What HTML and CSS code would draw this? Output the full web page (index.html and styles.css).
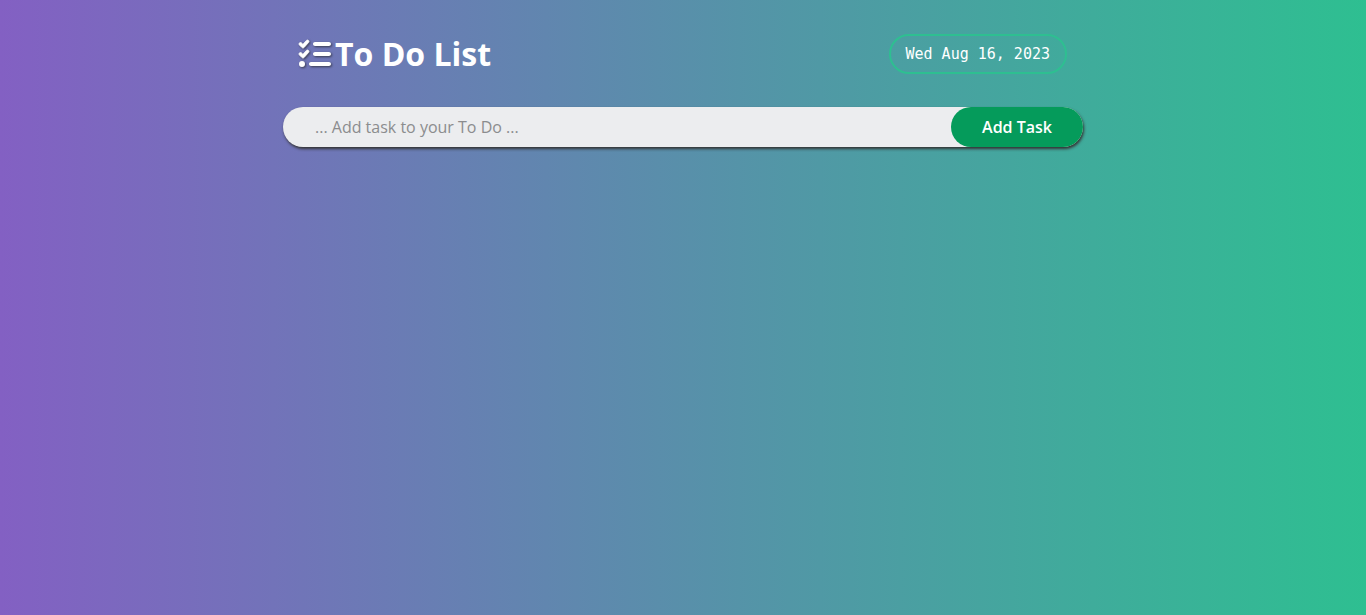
FILE: index.html
```html
<!DOCTYPE html>
<html lang="en">
<head>
  <meta charset="utf-8">
  <meta name="viewport" content="width=device-width, initial-scale=1">
  <title>To Do List</title>
  <link rel="stylesheet" href="styles.css">
</head>
<body>
  <main class="app">
    <header class="header">
      <h1 class="title">
        <svg class="title-icon" viewBox="0 0 512 512" aria-hidden="true">
          <path class="title-icon-checks" d="M152.100 38.200c9.900 8.900 10.700 24 1.800 33.900l-72 80c-4.400 4.900-10.600 7.800-17.200 7.900s-12.900-2.400-17.600-7L7 113C-2.300 103.600-2.300 88.400 7 79s24.600-9.400 33.900 0l22.100 22.100 55.100-61.200c8.900-9.900 24-10.700 33.900-1.800zm0 160c9.900 8.900 10.700 24 1.800 33.900l-72 80c-4.400 4.900-10.600 7.800-17.200 7.900s-12.900-2.400-17.600-7L7 273c-9.400-9.400-9.400-24.600 0-33.900s24.600-9.400 33.900 0l22.100 22.100 55.100-61.200c8.900-9.900 24-10.700 33.900-1.800z"/>
          <path d="M224 96c0-17.700 14.300-32 32-32H480c17.700 0 32 14.300 32 32s-14.300 32-32 32H256c-17.700 0-32-14.300-32-32zm0 160c0-17.700 14.300-32 32-32H480c17.700 0 32 14.300 32 32s-14.300 32-32 32H256c-17.700 0-32-14.300-32-32zM160 416c0-17.700 14.300-32 32-32H480c17.700 0 32 14.300 32 32s-14.300 32-32 32H192c-17.700 0-32-14.300-32-32zM48 368a48 48 0 1 1 0 96 48 48 0 1 1 0-96z"/>
        </svg>
        To Do List
      </h1>
      <time class="date" datetime="2023-08-16">Wed Aug 16, 2023</time>
    </header>
    <form class="task-form">
      <input class="task-input" type="text" placeholder="... Add task to your To Do ..." aria-label="New task">
      <button class="task-button" type="button">Add Task</button>
    </form>
  </main>
</body>
</html>
```
FILE: styles.css
```css
* {
  box-sizing: border-box;
}

body {
  margin: 0;
  min-height: 100vh;
  font-family: "Open Sans", sans-serif;
  font-size: 16px;
  color: #fff;
  background: linear-gradient(to right, #8360c3, #2ebf91);
}

.app {
  max-width: 832px;
  margin: 0 auto;
  padding: 32px 16px;
}

.header {
  display: flex;
  flex-wrap: wrap;
  align-items: center;
  justify-content: space-between;
  gap: 16px;
  padding: 0 16px;
  margin-bottom: 31px;
}

.title {
  display: flex;
  align-items: center;
  gap: 4px;
  margin: 0;
  font-size: 32px;
  font-weight: 700;
  line-height: 44px;
}

.title-icon {
  width: 32px;
  height: 32px;
  fill: currentColor;
  overflow: visible;
  filter: drop-shadow(1px 1px 1px rgba(34, 34, 34, 0.7));
}

.title-icon-checks {
  stroke: currentColor;
  stroke-width: 12;
}

.date {
  padding: 0 15px;
  border: 2px solid #2ebf91;
  border-radius: 20px;
  font-family: Consolas, "DejaVu Sans Mono", monospace;
  font-size: 15px;
  line-height: 36px;
}

.task-form {
  display: flex;
  height: 40px;
  border-radius: 20px;
  background: #ecedef;
  box-shadow: 1px 2px 3px #333;
}

.task-input {
  flex: 1;
  min-width: 0;
  padding: 0 32px;
  border: 0;
  border-radius: 20px;
  outline: 0;
  background: transparent;
  font: inherit;
  color: #333;
}

.task-input::placeholder {
  color: #8b8c8e;
}

.task-button {
  padding: 0 31px;
  border: 0;
  border-radius: 20px;
  background: #059b5b;
  font: inherit;
  font-weight: 600;
  color: #fff;
  cursor: pointer;
}
```
